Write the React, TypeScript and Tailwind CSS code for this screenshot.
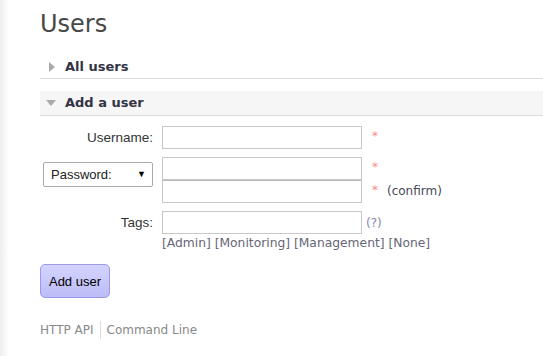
import React from "react";

const verdana = "font-['DejaVu_Sans',Verdana,sans-serif]";
const arial = "font-['Liberation_Sans',Arial,sans-serif]";

function Star() {
  return <span className={`${verdana} block text-[12px] leading-[12px] text-[#f88]`}>*</span>;
}

function TextInput({ className = "" }: { className?: string }) {
  return (
    <input
      type="text"
      className={`block h-[23px] w-[200px] border border-[#c8c8c8] bg-white px-1 outline-none ${className}`}
    />
  );
}

export default function App() {
  return (
    <div className="flex min-h-[356px] w-[543px] bg-white text-[#484848]">
      <div className="w-[9px] shrink-0 bg-gradient-to-r from-[#eeeeee] to-white" />
      <div className="min-w-0 flex-1 pl-[31px]">
        <h1 className={`${verdana} pt-[9px] text-[24px] leading-[30px] font-normal text-[#484848]`}>
          Users
        </h1>

        <div className="mt-[17px] flex h-[23px] items-center border-b border-[#dddddd]">
          <svg width="6" height="10" viewBox="0 0 6 10" className="ml-[9px]">
            <path d="M0 0 L6 5 L0 10 Z" fill="#aaaaaa" />
          </svg>
          <span className={`${verdana} ml-[10px] text-[13px] font-bold text-[#333344]`}>All users</span>
        </div>

        <div className="mt-[12px] flex h-[25px] items-center border-b border-[#dddddd] bg-[#f6f6f6]">
          <svg width="10" height="6" viewBox="0 0 10 6" className="ml-[6px]">
            <path d="M0 0 L10 0 L5 6 Z" fill="#aaaaaa" />
          </svg>
          <span className={`${verdana} ml-[9px] text-[13px] font-bold text-[#333344]`}>Add a user</span>
        </div>

        <div className="pt-[10px] leading-none">
          <div className="flex h-[23px] items-start">
            <label className={`${arial} w-[113px] pt-[4px] text-right text-[13.5px] leading-[16px] text-[#333]`}>
              Username:
            </label>
            <div className="ml-[9px]">
              <TextInput />
            </div>
            <div className="ml-[10px] pt-[4px]">
              <Star />
            </div>
          </div>

          <div className="mt-[8px] flex h-[46px] items-start">
            <div className="flex w-[113px] justify-end pt-[5px]">
              <div
                className={`${arial} flex h-[25px] w-[110px] items-center justify-between rounded-[2px] border border-[#aaaaaa] bg-white pr-[6px] pl-[7px] text-[13px] text-[#222]`}
              >
                <span>Password:</span>
                <span className="text-[9px] text-black">▼</span>
              </div>
            </div>
            <div className="ml-[9px]">
              <TextInput />
              <TextInput className="border-t-[#bbbbbb]" />
            </div>
            <div className="ml-[10px] flex flex-col">
              <div className="h-[23px] pt-[4px]">
                <Star />
              </div>
              <div className="flex h-[23px] items-start pt-[4px]">
                <Star />
                <span className={`${verdana} ml-[9px] -mt-[1px] text-[12px] leading-[16px] text-[#484858]`}>(confirm)</span>
              </div>
            </div>
          </div>

          <div className="mt-[8px] flex items-start">
            <label className={`${arial} w-[113px] pt-[4px] text-right text-[13.5px] leading-[16px] text-[#333]`}>
              Tags:
            </label>
            <div className="ml-[9px]">
              <div className="flex items-start">
                <TextInput />
                <span className={`${verdana} ml-[4px] pt-[4px] text-[12px] leading-[16px] text-[#8888aa]`}>(?)</span>
              </div>
              <div className={`${verdana} mt-[2px] text-[12.3px] leading-[15px] text-[#666677] whitespace-nowrap`}>
                [Admin] [Monitoring] [Management] [None]
              </div>
            </div>
          </div>

          <button
            className={`${arial} mt-[13px] h-[34px] w-[70px] rounded-[5px] border border-[#9999ee] bg-gradient-to-b from-[#d4d4ff] to-[#bcbcf8] text-[13px] text-black`}
          >
            Add user
          </button>
        </div>

        <div className={`${verdana} mt-[23px] flex items-center text-[12px] text-[#888888]`}>
          <span>HTTP API</span>
          <span className="mx-[6px] h-[18px] w-px bg-[#dddddd]" />
          <span>Command Line</span>
        </div>
      </div>
    </div>
  );
}
